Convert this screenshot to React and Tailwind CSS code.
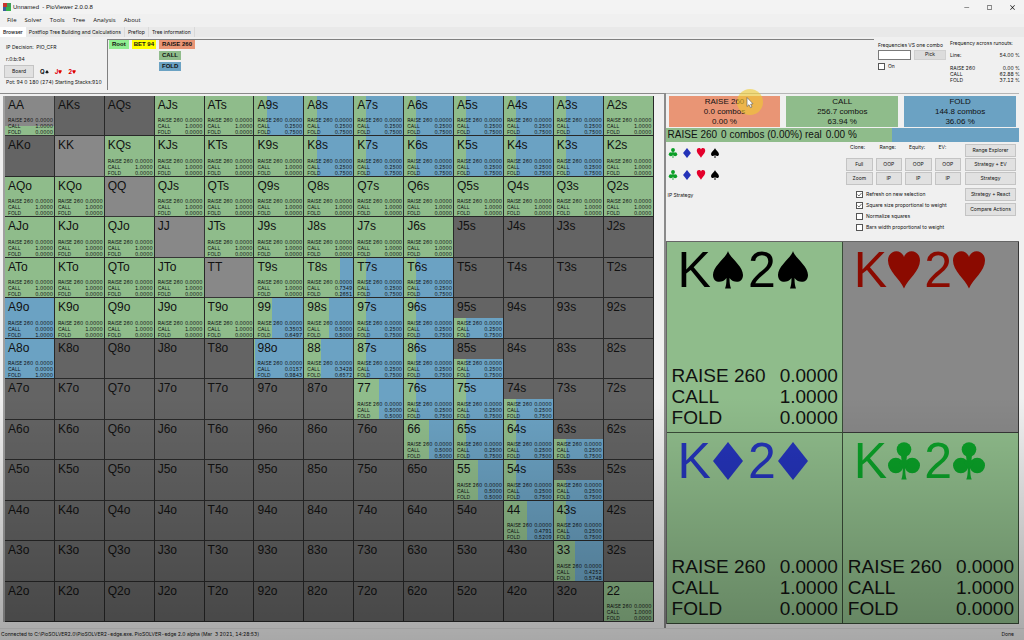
import { useState } from 'react'
import { VscChromeClose, VscChromeMaximize, VscChromeMinimize } from 'react-icons/vsc'

const RANKS = 'AKQJT98765432'.split('')

// Hands grouped by how often they call; the rest of the time they fold
const CALL_FREQUENCIES = [
    [1, 'AA AJs ATs A2s KQs KJs KTs K9s K2s AQo KQo QJs QTs Q9s Q8s Q7s Q6s Q5s Q4s Q3s Q2s'],
    [1, 'AJo KJo QJo JTs J9s J8s J7s J6s ATo KTo QTo JTo T9s K9o Q9o J9o T9o 22'],
    [0.25, 'A9s A8s A7s A6s A5s A4s A3s K8s K7s K6s K5s K4s K3s T7s T6s 97s 96s 95s'],
    [0.25, '87s 86s 85s 76s 75s 74s 65s 64s 63s 54s 53s 43s'],
    [0.5, '98s 77 66 55'],
    [0, 'A9o A8o'],
    [0.7349, 'T8s'],
    [0.3503, '99'],
    [0.0157, '98o'],
    [0.3428, '88'],
    [0.4791, '44'],
    [0.4252, '33']
]

const CALLS = {}
CALL_FREQUENCIES.forEach(([freq, hands]) => {
    hands.split(' ').forEach((hand) => {
        CALLS[hand] = freq
    })
})

// Share of the square that is filled, when it is not the whole of it
const WEIGHTS = { AA: 0.25, '95s': 0.5, '85s': 0.5, '74s': 0.5, '63s': 0.5, '53s': 0.5 }

const HANDS = RANKS.flatMap((row, i) =>
    RANKS.map((col, j) => {
        if (i === j) return row + col
        return i < j ? `${row}${col}s` : `${col}${row}o`
    })
)

const SUIT_COLORS = {
    club: 'text-[#0a9f27]',
    diamond: 'text-[#2433b8]',
    heart: 'text-[#e4002b]',
    spade: 'text-black'
}

function Suit({ name, className }) {
    return (
        <svg viewBox="0 0 32 38" fill="currentColor" className={className} aria-hidden="true">
            {name === 'spade' && (
                <path d="M16 0C18 7 31 15 31 24C31 32 22 33 17.5 27C17.5 32 18 35 19 37.5H13C14 35 14.5 32 14.5 27C10 33 1 32 1 24C1 15 14 7 16 0Z" />
            )}
            {name === 'heart' && (
                <path d="M16 37.5C12 28 0 20 0 9.5C0 -1 13 -3 16 6C19 -3 32 -1 32 9.5C32 20 20 28 16 37.5Z" />
            )}
            {name === 'diamond' && <path d="M16 0L31 19L16 38L1 19Z" />}
            {name === 'club' && (
                <>
                    <circle cx="16" cy="7.5" r="7.3" />
                    <circle cx="7.8" cy="23.5" r="7.8" />
                    <circle cx="24.2" cy="23.5" r="7.8" />
                    <path d="M13 13H19L18.5 18L21 21L17.2 25C17.2 31 17.5 35 18.7 37.5H13.3C14.5 35 14.8 31 14.8 25L11 21L13.5 18Z" />
                </>
            )}
        </svg>
    )
}

function ActionRows({ call }) {
    const rows = [
        ['RAISE 260', 0],
        ['CALL', call],
        ['FOLD', 1 - call]
    ]
    return rows.map(([name, value]) => (
        <div key={name} className="flex justify-between whitespace-nowrap">
            <span>{name}</span>
            <span>{value.toFixed(4)}</span>
        </div>
    ))
}

function HandSquare({ hand }) {
    const call = CALLS[hand]
    const inRange = call !== undefined
    const isPair = hand.length === 2

    return (
        <div className={`grid min-w-0 min-h-0 border-r border-b border-black/60 ${isPair ? 'bg-[#888888]' : 'bg-[#646464]'}`}>
            {inRange && (
                <div
                    className="col-start-1 row-start-1 self-end flex bg-[#6ba2c3]"
                    style={{ height: `${(WEIGHTS[hand] ?? 1) * 100}%` }}
                >
                    <div className="bg-[#8fbc8b]" style={{ width: `${call * 100}%` }} />
                </div>
            )}
            <div className="col-start-1 row-start-1 flex flex-col justify-between pl-[3px] pr-px pt-0.5">
                <span className="text-[12px] leading-[14px]">{hand}</span>
                {inRange && (
                    <div className="font-[Inter,sans-serif] text-[5px] leading-[6px]">
                        <ActionRows call={call} />
                    </div>
                )}
            </div>
        </div>
    )
}

function ComboCard({ suit, color, call }) {
    return (
        <div
            className={`flex flex-col justify-between border-r border-b border-black/60 pl-[5px] pr-1 pt-[3px] pb-1 ${
                call === undefined ? 'bg-[#888888]' : 'bg-[#8fbc8b]'
            }`}
        >
            <div className={`flex items-center gap-px pl-1.5 text-[50px] leading-[50px] ${color}`}>
                <span>K</span>
                <Suit name={suit} className="w-8 h-[38px]" />
                <span className="pl-[3px]">2</span>
                <Suit name={suit} className="w-8 h-[38px]" />
            </div>
            {call !== undefined && (
                <div className="text-[19px] leading-[21px]">
                    <ActionRows call={call} />
                </div>
            )}
        </div>
    )
}

function Button({ children, className = '' }) {
    return (
        <button className={`h-[13px] border border-[#c4c4c4] bg-[#e1e1e1] hover:bg-[#e5f1fb] whitespace-nowrap ${className}`}>
            {children}
        </button>
    )
}

function Checkbox({ label, defaultChecked = false }) {
    const [checked, setChecked] = useState(defaultChecked)
    return (
        <label className="flex items-center gap-[3px] whitespace-nowrap">
            <span className="grid">
                <input
                    type="checkbox"
                    checked={checked}
                    onChange={(e) => setChecked(e.target.checked)}
                    className="col-start-1 row-start-1 appearance-none size-[7px] border border-[#555] bg-white"
                />
                {checked && (
                    <svg viewBox="0 0 7 7" className="col-start-1 row-start-1 size-[7px] pointer-events-none" aria-hidden="true">
                        <path d="M1.5 3.5L3 5L5.5 2" fill="none" stroke="#333" strokeWidth="0.7" />
                    </svg>
                )}
            </span>
            {label}
        </label>
    )
}

function TitleBar() {
    return (
        <header className="flex items-center h-[14px] shrink-0 pl-[3px] pr-2 bg-[#f3f3f3] font-['Liberation_Sans',sans-serif] text-[6px]">
            <svg viewBox="0 0 8 8" className="size-2 mr-0.5" aria-hidden="true">
                <rect width="8" height="8" fill="#3d6b4a" />
                <rect width="4" height="4" fill="#c8342c" />
                <rect x="4" width="4" height="4" fill="#3f9d57" />
                <rect y="4" width="3" height="4" fill="#3a5f9c" />
                <rect x="3" y="4" width="5" height="4" fill="#37b34a" />
            </svg>
            <h1 className="whitespace-pre">{'Unnamed  - PioViewer 2.0.0.8'}</h1>
            <div className="ml-auto flex gap-4 text-[7px]">
                <button aria-label="Minimize"><VscChromeMinimize /></button>
                <button aria-label="Maximize"><VscChromeMaximize /></button>
                <button aria-label="Close"><VscChromeClose /></button>
            </div>
        </header>
    )
}

function TopPanel() {
    return (
        <section className="flex h-14 shrink-0 pt-0.5">
            <div className="w-[107px] shrink-0 flex flex-col pl-1.5 pt-1 whitespace-nowrap">
                <p className="leading-[8px]">IP Decision:&nbsp; PIO_CFR</p>
                <p className="leading-[8px] mt-1">r:0:b:94</p>
                <div className="flex items-center gap-1.5 mt-0.5 -ml-0.5 text-[6px] font-bold">
                    <Button className="w-[30px] text-[5px] font-normal">Board</Button>
                    <span className="flex items-center">Q<Suit name="spade" className="size-1" /></span>
                    <span className="flex items-center text-[#e00000]">J<Suit name="heart" className="size-1" /></span>
                    <span className="flex items-center text-[#e00000]">2<Suit name="heart" className="size-1" /></span>
                </div>
                <p className="leading-[8px]">Pot: 94 0 180 (274) Starting Stacks:910</p>
            </div>

            {/* Tree path */}
            <div className="flex-1 min-w-0 flex items-start gap-[3px] border-t border-l border-[#808080] pl-px font-['Liberation_Sans',sans-serif] text-[6px] leading-[9px] font-bold mb-[3px]">
                <button className="px-[3px] bg-[#90ee90]">Root</button>
                <button className="px-0.5 bg-[#ffff00]">BET 94</button>
                <div className="flex flex-col items-start gap-0.5">
                    <button className="px-[3px] bg-[#e99575]">RAISE 260</button>
                    <button className="px-[3px] bg-[#8fbc8b]">CALL</button>
                    <button className="px-[3px] bg-[#6ba2c3]">FOLD</button>
                </div>
            </div>

            <div className="w-[150px] shrink-0 flex justify-between pl-1 pr-1 pt-px whitespace-nowrap">
                <div className="w-[68px]">
                    <label htmlFor="combo" className="block leading-[10px]">Frequencies VS one combo</label>
                    <div className="flex gap-[3px]">
                        <input id="combo" type="text" className="w-[33px] h-[10px] border border-[#7a7a7a] bg-white px-0.5" />
                        <button className="w-8 h-[10px] border border-[#d0d0d0] bg-[#dcdcdc]">Pick</button>
                    </div>
                    <div className="mt-[3px]"><Checkbox label="On" /></div>
                </div>
                <div className="w-[70px] leading-[7px]">
                    <p>Frequency across runouts:</p>
                    <div className="flex justify-between mt-[5px] mb-1.5"><span>Line:</span><span>54.00 %</span></div>
                    <div className="leading-[6px]">
                        <div className="flex justify-between"><span>RAISE 260</span><span>0.00 %</span></div>
                        <div className="flex justify-between"><span>CALL</span><span>62.88 %</span></div>
                        <div className="flex justify-between"><span>FOLD</span><span>37.12 %</span></div>
                    </div>
                </div>
            </div>
        </section>
    )
}

const SUMMARY = [
    { name: 'RAISE 260', combos: '0.0', percent: '0.00', color: 'bg-[#e99575]' },
    { name: 'CALL', combos: '256.7', percent: '63.94', color: 'bg-[#8fbc8b]' },
    { name: 'FOLD', combos: '144.8', percent: '36.06', color: 'bg-[#6ba2c3]' }
]

function Pointer() {
    return (
        <svg viewBox="0 0 26 26" className="absolute left-[68px] -top-[7px] size-[26px] pointer-events-none" aria-hidden="true">
            <circle cx="13" cy="13" r="13" fill="#f0cc30" fillOpacity="0.6" />
            <path d="M10 8.5V17.5L12 15.7L13.5 18.7L15 18L13.6 15.2L16 14.8Z" fill="#fff" stroke="#555" strokeWidth="0.6" />
        </svg>
    )
}

function StrategySummary() {
    return (
        <>
            <div className="grid grid-cols-3 gap-1.5 px-[3px] pt-0.5 text-[8px] leading-[10px]">
                {SUMMARY.map((item) => (
                    <button key={item.name} className={`relative h-[31px] ${item.color}`}>
                        <span className="block">{item.name}</span>
                        <span className="block">{item.combos} combos</span>
                        <span className="block">{item.percent} %</span>
                        {item.name === 'RAISE 260' && <Pointer />}
                    </button>
                ))}
            </div>
            <div className="grid mt-px h-[14px] bg-[#6ba2c3]">
                <div className="col-start-1 row-start-1 bg-[#8fbc8b]" style={{ width: '63.94%' }} />
                <div className="col-start-1 row-start-1 flex gap-1 pl-0.5 text-[10px] leading-[14px] whitespace-nowrap">
                    <span>RAISE 260</span>
                    <span>0 combos (0.00%) real</span>
                    <span>0.00 %</span>
                </div>
            </div>
        </>
    )
}

function Controls() {
    return (
        <div className="flex justify-between pl-0.5 pr-[3px] pt-0.5 h-[99px] font-[Inter,sans-serif] text-[5px] leading-[7px]">
            <div>
                {[0, 1].map((row) => (
                    <div key={row} className="flex gap-1 pt-1 pb-2">
                        {['club', 'diamond', 'heart', 'spade'].map((suit) => (
                            <button key={suit} aria-label={suit} className={SUIT_COLORS[suit]}>
                                <Suit name={suit} className="w-2.5 h-[10px]" />
                            </button>
                        ))}
                    </div>
                ))}
                <p className="mt-1">IP Strategy</p>
            </div>

            <div className="flex gap-1">
                <div>
                    <div className="grid grid-cols-4 gap-x-[3px] gap-y-px w-[115px]">
                        <span className="pl-1 h-[13px]">Clone:</span>
                        <span className="pl-1">Range:</span>
                        <span className="pl-1">Equity:</span>
                        <span className="pl-1">EV:</span>
                        <Button>Full</Button>
                        <Button>OOP</Button>
                        <Button>OOP</Button>
                        <Button>OOP</Button>
                        <Button>Zoom</Button>
                        <Button>IP</Button>
                        <Button>IP</Button>
                        <Button>IP</Button>
                    </div>
                    <div className="flex flex-col gap-1 pl-2.5 pt-1.5">
                        <Checkbox label="Refresh on new selection" defaultChecked />
                        <Checkbox label="Square size proportional to weight" defaultChecked />
                        <Checkbox label="Normalize squares" />
                        <Checkbox label="Bars width proportional to weight" />
                    </div>
                </div>
                <div className="flex flex-col gap-px w-[51px]">
                    <Button>Range Explorer</Button>
                    <Button>Strategy + EV</Button>
                    <Button>Strategy</Button>
                    <Button className="mt-0.5">Strategy + React</Button>
                    <Button className="mt-px">Compare Actions</Button>
                </div>
            </div>
        </div>
    )
}

export default function App() {
    return (
        <div className="relative flex flex-col h-screen bg-[#f0f0f0] text-[#111] font-[Inter,sans-serif] text-[5px] tabular-nums overflow-hidden cursor-default">
            <TitleBar />

            <nav className="flex items-center gap-2 h-[13px] shrink-0 pl-[7px] font-['Open_Sans',sans-serif] text-[6px]">
                {['File', 'Solver', 'Tools', 'Tree', 'Analysis', 'About'].map((item) => (
                    <button key={item}>{item}</button>
                ))}
            </nav>

            <div role="tablist" className="flex h-[10px] shrink-0 bg-[#e9e9e9] leading-[10px]">
                <button role="tab" aria-selected="true" className="px-[3px] bg-white font-medium">Browser</button>
                <button role="tab" aria-selected="false" className="px-[3px] border-r border-[#d9d9d9]">Postflop Tree Building and Calculations</button>
                <button role="tab" aria-selected="false" className="px-[3px] border-r border-[#d9d9d9]">Preflop</button>
                <button role="tab" aria-selected="false" className="px-[3px] border-r border-[#d9d9d9]">Tree information</button>
            </div>

            <TopPanel />

            <main className="flex flex-1 min-h-0 font-['Liberation_Sans',Arial,sans-serif]">
                <section className="w-[65%] flex border-t border-r-2 border-[#8a8a8a] pl-[3px]">
                    <div className="flex-1 grid grid-cols-13 grid-rows-13 border-l-2 border-[#a0a0a0] mt-0.5 mb-1.5 mr-2.5">
                        {HANDS.map((hand) => (
                            <HandSquare key={hand} hand={hand} />
                        ))}
                    </div>
                </section>

                <section className="flex-1 min-w-0 flex flex-col border-t border-[#b5b5b5] mr-[5px]">
                    <StrategySummary />
                    <Controls />
                    <div className="flex-1 grid grid-cols-2 grid-rows-2 border-t border-l border-[#666] mb-1">
                        <ComboCard suit="spade" color="text-black" call={1} />
                        <ComboCard suit="heart" color="text-[#8b0a00]" />
                        <ComboCard suit="diamond" color="text-[#2433b8]" call={1} />
                        <ComboCard suit="club" color="text-[#0a9f27]" call={1} />
                    </div>
                </section>
            </main>

            <footer className="flex items-center justify-between h-3 shrink-0 pl-px pr-2.5 border-t border-[#e0e0e0]">
                <span className="whitespace-pre">{'Connected to C:\\PioSOLVER2.0\\PioSOLVER2-edge.exe. PioSOLVER-edge 2.0 alpha (Mar  3 2021, 14:28:53)'}</span>
                <span>Done</span>
            </footer>

            {/* Shade towards the bottom of the window */}
            <div className="absolute inset-x-0 bottom-0 h-[38%] bg-linear-to-b from-black/0 to-black/30 pointer-events-none" />
        </div>
    )
}
